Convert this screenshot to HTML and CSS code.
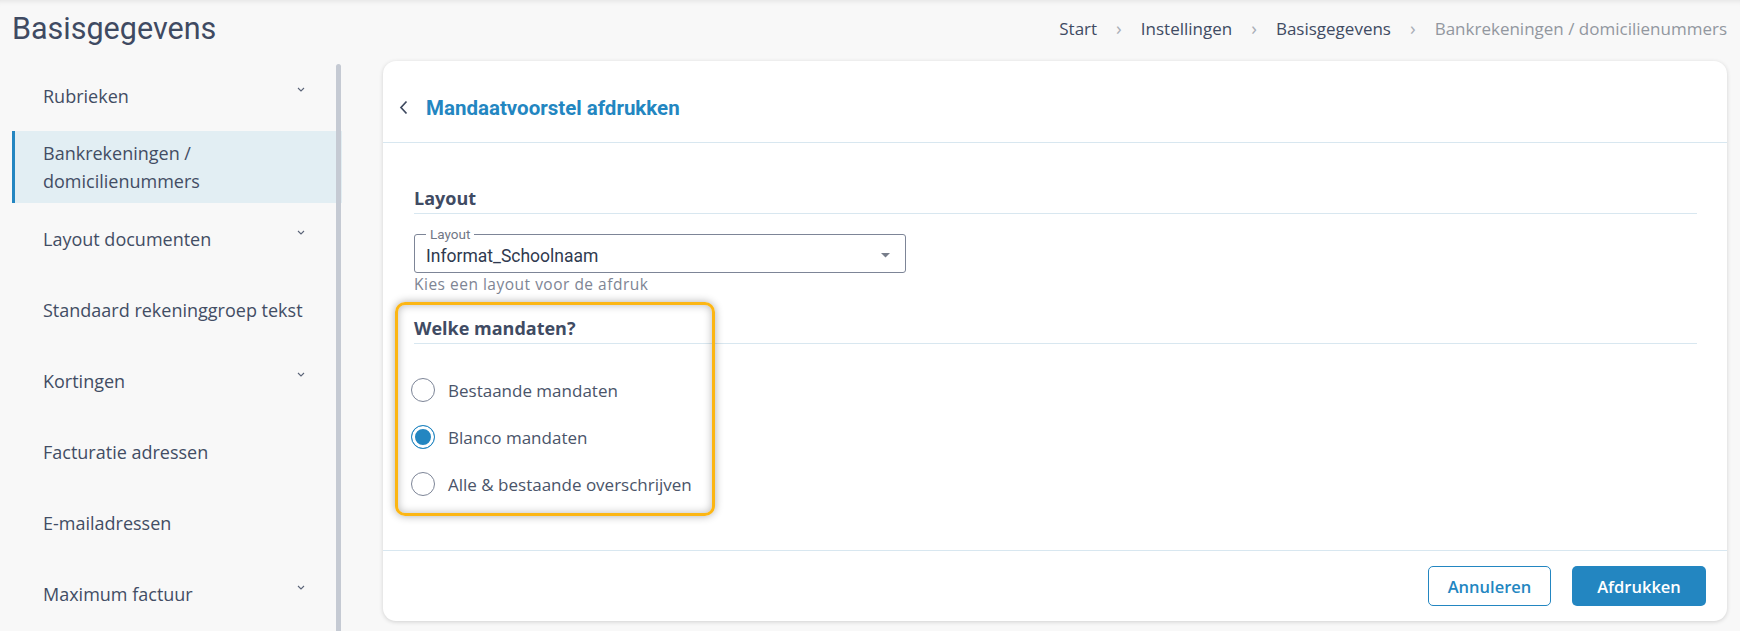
FILE: index.html
```html
<!DOCTYPE html>
<html lang="nl">
<head>
  <meta charset="UTF-8">
  <meta name="viewport" content="width=device-width, initial-scale=1.0">
  <title>Basisgegevens</title>
  <link rel="stylesheet" href="styles.css">
</head>
<body>
  <div class="topbar">
    <h1 class="page-title">Basisgegevens</h1>
    <nav class="breadcrumb">
      <a href="#">Start</a>
      <span class="crumb-sep">&#8250;</span>
      <a href="#">Instellingen</a>
      <span class="crumb-sep">&#8250;</span>
      <a href="#">Basisgegevens</a>
      <span class="crumb-sep">&#8250;</span>
      <span class="crumb-current">Bankrekeningen / domicilienummers</span>
    </nav>
  </div>

  <div class="main">
    <aside class="sidebar">
      <ul class="menu">
        <li class="menu-item">
          <span>Rubrieken</span>
          <svg class="menu-caret" width="8" height="5" viewBox="0 0 8 5"><path d="M1 1l3 3 3-3" fill="none" stroke="#5b6478" stroke-width="1.1"/></svg>
        </li>
        <li class="menu-item active">
          <span>Bankrekeningen /<br>domicilienummers</span>
        </li>
        <li class="menu-item">
          <span>Layout documenten</span>
          <svg class="menu-caret" width="8" height="5" viewBox="0 0 8 5"><path d="M1 1l3 3 3-3" fill="none" stroke="#5b6478" stroke-width="1.1"/></svg>
        </li>
        <li class="menu-item"><span>Standaard rekeninggroep tekst</span></li>
        <li class="menu-item">
          <span>Kortingen</span>
          <svg class="menu-caret" width="8" height="5" viewBox="0 0 8 5"><path d="M1 1l3 3 3-3" fill="none" stroke="#5b6478" stroke-width="1.1"/></svg>
        </li>
        <li class="menu-item"><span>Facturatie adressen</span></li>
        <li class="menu-item"><span>E-mailadressen</span></li>
        <li class="menu-item">
          <span>Maximum factuur</span>
          <svg class="menu-caret" width="8" height="5" viewBox="0 0 8 5"><path d="M1 1l3 3 3-3" fill="none" stroke="#5b6478" stroke-width="1.1"/></svg>
        </li>
      </ul>
      <div class="scroll-thumb"></div>
    </aside>

    <section class="card">
      <div class="card-header">
        <svg class="back-icon" width="9" height="15" viewBox="0 0 9 15"><path d="M7.5 1.5L2 7.5l5.5 6" fill="none" stroke="#3f4a60" stroke-width="1.7"/></svg>
        <h2 class="card-title">Mandaatvoorstel afdrukken</h2>
      </div>

      <div class="card-body">
        <h3 class="section-title">Layout</h3>
        <div class="field">
          <span class="field-legend">Layout</span>
          <span class="field-value">Informat_Schoolnaam</span>
          <svg class="field-arrow" width="9" height="5" viewBox="0 0 9 5"><path d="M0 0h9L4.5 4.5z" fill="#777d8a"/></svg>
        </div>
        <p class="field-hint">Kies een layout voor de afdruk</p>

        <h3 class="section-title">Welke mandaten?</h3>
        <div class="radio-group">
          <label class="radio"><span class="radio-dot"></span>Bestaande mandaten</label>
          <label class="radio checked"><span class="radio-dot"></span>Blanco mandaten</label>
          <label class="radio"><span class="radio-dot"></span>Alle &amp; bestaande overschrijven</label>
        </div>

        <div class="highlight"></div>
      </div>

      <div class="card-footer">
        <button class="btn btn-outline">Annuleren</button>
        <button class="btn btn-primary">Afdrukken</button>
      </div>
    </section>
  </div>
</body>
</html>
```

FILE: styles.css
```css
* {
  margin: 0;
  padding: 0;
  box-sizing: border-box;
}

body {
  font-family: 'Open Sans', 'Noto Sans', sans-serif;
  background: #f8f8f8;
  color: #404b63;
  height: 631px;
  overflow: hidden;
  box-shadow: inset 0 6px 6px -6px rgba(0,0,0,0.12);
}

.topbar {
  display: flex;
  justify-content: space-between;
  align-items: center;
  height: 60px;
  padding: 0 13px 4px 12px;
}

.page-title {
  font-family: Roboto, sans-serif;
  font-size: 30.5px;
  font-weight: 400;
  color: #3f4a62;
}

.breadcrumb {
  display: flex;
  align-items: center;
  gap: 19px;
  font-size: 17px;
}

.breadcrumb a {
  color: #404b63;
  text-decoration: none;
}

.crumb-sep {
  color: #a9aeb7;
  font-size: 19px;
}

.crumb-current {
  color: #92979f;
}

.main {
  display: flex;
  align-items: flex-start;
  padding-right: 13px;
}

.sidebar {
  position: relative;
  width: 330px;
  margin-left: 12px;
  height: 571px;
}

.menu {
  list-style: none;
}

.menu-item {
  display: flex;
  align-items: center;
  justify-content: space-between;
  min-height: 71px;
  padding: 8px 37px 8px 31px;
  font-size: 18px;
  line-height: 28px;
  color: #424d64;
}

.menu-item.active {
  background: #e2eef3;
  border-left: 3px solid #2386c1;
  padding-left: 28px;
  min-height: 72px;
}

.menu-caret {
  margin-bottom: 12px;
}

.scroll-thumb {
  position: absolute;
  top: 4px;
  right: 1px;
  bottom: 0;
  width: 5px;
  background: #c5cad3;
  border-radius: 3px 3px 0 0;
}

.card {
  position: relative;
  flex: 1;
  margin-left: 41px;
  margin-top: 1px;
  height: 560px;
  background: #fff;
  border-radius: 13px;
  box-shadow: 0 1px 4px rgba(0,0,0,0.16);
  display: flex;
  flex-direction: column;
}

.card-header {
  display: flex;
  align-items: center;
  gap: 18px;
  height: 82px;
  padding: 12px 17px 0 16px;
  border-bottom: 1px solid #d8e7f0;
}

.card-title {
  font-family: Roboto, sans-serif;
  font-size: 20.5px;
  font-weight: 700;
  color: #2386c1;
}

.card-body {
  position: relative;
  flex: 1;
  padding: 43px 30px 0 31px;
}

.section-title {
  font-size: 18px;
  font-weight: 700;
  line-height: 24px;
  color: #404b63;
  padding-bottom: 3px;
  border-bottom: 1px solid #d8e7f0;
}

.field {
  position: relative;
  display: flex;
  align-items: center;
  justify-content: space-between;
  width: 492px;
  height: 39px;
  margin-top: 20px;
  padding: 4px 15px 0 11px;
  border: 1px solid #7d8597;
  border-radius: 3px;
}

.field-legend {
  position: absolute;
  top: -9px;
  left: 11px;
  padding: 0 4px;
  background: #fff;
  font-family: Roboto, sans-serif;
  font-size: 13.5px;
  line-height: 16px;
  color: #717786;
}

.field-value {
  font-family: Roboto, sans-serif;
  font-size: 17.5px;
  color: #2f3a4f;
}

.field-hint {
  font-size: 15.5px;
  letter-spacing: 0.5px;
  line-height: 20px;
  margin-top: 1px;
  color: #7e8594;
  margin-bottom: 22px;
}

.radio-group {
  display: flex;
  flex-direction: column;
  gap: 23px;
  margin-top: 34px;
}

.radio {
  display: flex;
  align-items: center;
  gap: 13px;
  height: 24px;
  font-size: 17px;
  color: #4a5469;
}

.radio-dot {
  width: 24px;
  height: 24px;
  margin-left: -3px;
  border: 1.5px solid #7d8597;
  border-radius: 50%;
}

.radio.checked .radio-dot {
  border-color: #2386c1;
  background: #2386c1;
  box-shadow: inset 0 0 0 3px #fff;
}

.highlight {
  position: absolute;
  left: 12px;
  top: 159px;
  width: 320px;
  height: 214px;
  border: 3.5px solid #fcb614;
  border-radius: 10px;
  box-shadow: 0 0 8px rgba(0,0,0,0.32), inset 0 0 8px rgba(0,0,0,0.28);
  pointer-events: none;
}

.card-footer {
  display: flex;
  justify-content: flex-end;
  align-items: center;
  gap: 21px;
  height: 71px;
  padding-right: 21px;
  border-top: 1px solid #d8e7f0;
}

.btn {
  height: 40px;
  border-radius: 5px;
  font-family: 'Open Sans', sans-serif;
  font-size: 16.5px;
  font-weight: 600;
  cursor: pointer;
}

.btn-outline {
  width: 123px;
  background: #fff;
  color: #2386c1;
  border: 1px solid #2386c1;
}

.btn-primary {
  width: 134px;
  background: #2386c1;
  color: #fff;
  border: none;
}
```
